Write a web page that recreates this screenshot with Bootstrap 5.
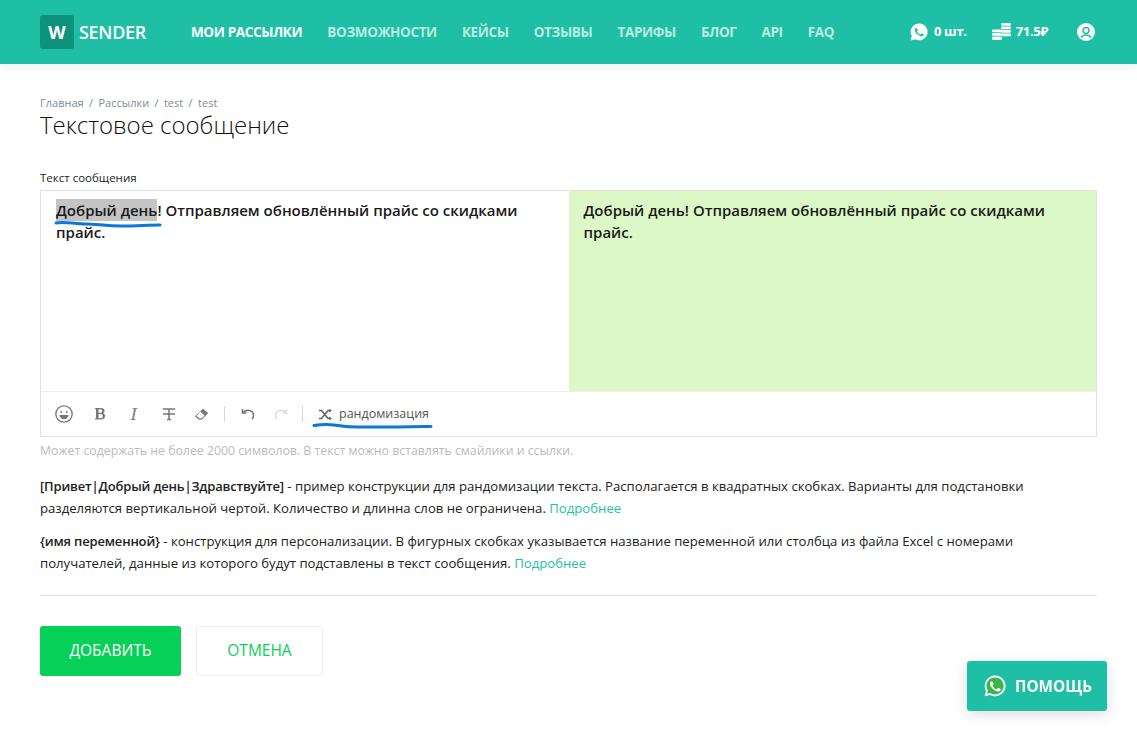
<!DOCTYPE html>
<html lang="ru">
  <head>
    <meta charset="UTF-8" />
    <meta name="viewport" content="width=device-width, initial-scale=1.0" />
    <title>Текстовое сообщение - WSender</title>
    <link href="https://cdn.jsdelivr.net/npm/bootstrap@5.3.0/dist/css/bootstrap.min.css" rel="stylesheet" />
    <style>
      body { font-family: "Open Sans", "Noto Sans", sans-serif; font-size: 13px; color: #212529; overflow: hidden; }
      .top-bar { height: 64px; background: #1fbfa5; padding: 0 40px; box-shadow: 0 2px 10px rgba(0,0,0,.08); }
      .logo-box { width: 34px; height: 34px; background: #0f927d; border-radius: 3px; color: #fff; font-weight: 700; font-size: 18px; }
      .logo-text { color: #fff; font-size: 18px; font-weight: 600; margin-left: 5px; letter-spacing: -.3px; }
      .top-links { margin-left: 45px; gap: 25px; }
      .top-links a { color: rgba(255,255,255,.7); font-size: 13.5px; font-weight: 700; text-decoration: none; letter-spacing: -.35px; }
      .top-links a.active { color: #fff; }
      .top-stat { color: #fff; font-size: 13px; font-weight: 700; gap: 6px; letter-spacing: -.3px; }
      .stat-coins { margin-left: 25px; gap: 5px; }
      .stat-user { margin-left: 29px; margin-right: 2px; }
      .page-body { padding: 32px 40px 0; }
      .crumbs { font-size: 11px; color: #7f8a94; line-height: 14px; }
      .crumbs span { margin: 0 5.4px; }
      .page-title { font-size: 24px; font-weight: 300; line-height: 30px; margin: 0 0 31px; color: #111; }
      .field-label { font-size: 11.5px; line-height: 14px; margin-bottom: 5px; display: block; }
      .editor-box { border: 1px solid #e2e2e2; position: relative; }
      .editor-panes { height: 200px; }
      .pane { padding: 8px 15px; font-size: 15px; font-weight: 600; line-height: 22px; width: 50%; color: #1a1a1a; }
      .pane-preview { background: #dcf8c6; }
      .pick { background: #c4c4c4; display: inline-block; }
      .tool-row { height: 45px; border-top: 1px solid #eee; padding-left: 14px; color: #777; }
      .tool-sep { width: 1px; height: 16px; background: #d8d8d8; }
      .tool-bold { margin-left: 21px; }
      .tool-ital { margin-left: 24px; }
      .tool-strike { margin-left: 24px; }
      .tool-erase { margin-left: 18px; }
      .tool-sep-a { margin-left: 15px; }
      .tool-undo { margin-left: 16px; }
      .tool-redo { margin-left: 19px; }
      .tool-sep-b { margin-left: 14px; }
      .tool-mix { margin-left: 16px; }
      .rand-label { font-size: 12.5px; color: #555; margin-left: 7px; }
      .hint { font-size: 12.3px; color: #bbb; margin: 6px 0 0; line-height: 16px; }
      .note { font-size: 13.15px; line-height: 22px; margin: 0; color: #222; max-width: 1040px; }
      .note b { font-size: 13px; font-weight: 600; letter-spacing: -.17px; }
      .note a { color: #1fbfa5; text-decoration: none; }
      .note-next { margin-top: 11px; }
      .rule { border: 0; border-top: 1px solid #e4e4e4; opacity: 1; margin: 21px 0 30px; }
      .btn-add { background: #07d059; color: #fff; width: 141px; height: 50px; font-size: 15.5px; border-radius: 3px; }
      .btn-cancel { background: #fff; color: #07d059; width: 127px; height: 50px; font-size: 15.5px; border: 1px solid #eee; border-radius: 3px; margin-left: 15px; }
      .help-btn { position: fixed; left: 967px; top: 661px; width: 140px; height: 50px; background: #1fbfa5; color: #fff; font-weight: 700; font-size: 15.3px; border-radius: 3px; box-shadow: 0 3px 14px rgba(0,0,0,.14); gap: 9px; padding-left: 2px; }
      .scribble { position: absolute; pointer-events: none; }
    </style>
  </head>
  <body>
    <nav class="top-bar d-flex align-items-center">
      <div class="logo-box d-flex align-items-center justify-content-center">W</div>
      <div class="logo-text">SENDER</div>
      <div class="top-links d-flex">
        <a class="active" href="#">МОИ РАССЫЛКИ</a>
        <a href="#">ВОЗМОЖНОСТИ</a>
        <a href="#">КЕЙСЫ</a>
        <a href="#">ОТЗЫВЫ</a>
        <a href="#">ТАРИФЫ</a>
        <a href="#">БЛОГ</a>
        <a href="#">API</a>
        <a href="#">FAQ</a>
      </div>
      <div class="ms-auto d-flex align-items-center">
        <div class="top-stat d-flex align-items-center">
          <svg width="18" height="18" viewBox="0 0 22 22"><path fill="#fff" d="M11 .6A10.300 10.300 0 0 0 2.100 16L.7 21.300l5.500-1.400A10.300 10.300 0 1 0 11 .6z"/><path fill="#1fbfa5" d="M7.900 5.800c-.3 0-.7.100-1 .5-.4.400-1 1-1 2.400s1 2.700 1.100 2.900c.2.200 2 3 4.700 4.100 2 .8 2.500.7 3 .6.600-.1 1.500-.7 1.800-1.300.2-.6.200-1.100.1-1.200l-2-1c-.3-.1-.5-.1-.7.100l-.9 1.100c-.2.200-.3.200-.6.100-.3-.1-1.200-.4-2.200-1.400-.8-.7-1.400-1.600-1.500-1.900-.2-.3 0-.4.100-.6l.7-.9c.1-.2.100-.4 0-.6l-.9-2.100c-.2-.4-.4-.4-.7-.4z"/></svg>
          <span>0 шт.</span>
        </div>
        <div class="top-stat stat-coins d-flex align-items-center">
          <svg width="19" height="18" viewBox="0 0 19 18" fill="#fff"><rect x="9" y="0" width="10" height="2.700" rx="1.300"/><rect x="9" y="3.500" width="10" height="2.700" rx="1.300"/><rect x="9" y="7" width="10" height="2.700" rx="1.300"/><rect x="9" y="10.500" width="10" height="2.700" rx="1.300"/><rect x="0" y="6.500" width="10" height="2.700" rx="1.300"/><rect x="0" y="10" width="10" height="2.700" rx="1.300"/><rect x="0" y="13.500" width="10" height="3.500" rx="1.500"/></svg>
          <span>71.5₽</span>
        </div>
        <svg class="stat-user" width="18" height="18" viewBox="0 0 18 18"><circle cx="9" cy="9" r="9" fill="#fff"/><circle cx="9" cy="7.500" r="3" fill="none" stroke="#1fbfa5" stroke-width="1.500"/><path d="M4 14.500c1.200-1.800 3-2.500 5-2.500s3.800.7 5 2.500" fill="none" stroke="#1fbfa5" stroke-width="1.500"/></svg>
      </div>
    </nav>

    <main class="page-body">
      <div class="crumbs">Главная<span>/</span>Рассылки<span>/</span>test<span>/</span>test</div>
      <h1 class="page-title">Текстовое сообщение</h1>

      <label class="field-label">Текст сообщения</label>
      <div class="editor-box">
        <div class="editor-panes d-flex">
          <div class="pane"><span class="pick">Добрый день</span>! Отправляем обновлённый прайс со скидками прайс.</div>
          <div class="pane pane-preview">Добрый день! Отправляем обновлённый прайс со скидками прайс.</div>
        </div>
        <div class="tool-row d-flex align-items-center">
          <svg width="18" height="18" viewBox="0 0 18 18" fill="none" stroke="#777" stroke-width="1.300"><circle cx="9" cy="9" r="8.200"/><circle cx="6.200" cy="7" r="1" fill="#777" stroke="none"/><circle cx="11.800" cy="7" r="1" fill="#777" stroke="none"/><path d="M4.500 10h9c0 2.500-2 4.200-4.500 4.200S4.500 12.500 4.500 10z" fill="#777" stroke="none"/></svg>
          <svg class="tool-bold" width="12" height="14" viewBox="0 0 12 14"><path fill="#777" fill-rule="evenodd" d="M1 1h6c2.200 0 3.600 1 3.600 2.900 0 1.200-.7 2-1.700 2.400 1.300.3 2.200 1.200 2.200 2.700 0 2.200-1.700 3.500-4 3.500H1v-1l1-.2V2.200L1 2zm3.500 1.200v3.600h1.800c1.200 0 1.900-.7 1.900-1.800s-.7-1.800-2-1.800zm0 4.800v4.300h2c1.400 0 2.200-.8 2.200-2.100S7.900 7 6.400 7z"/></svg>
          <svg class="tool-ital" width="8" height="14" viewBox="0 0 8 14"><path fill="#888" d="M2.500 1h5v.8l-1.500.3L4 12l1.500.3v.8H.5v-.8l1.500-.3L4 2.100l-1.500-.3z"/></svg>
          <svg class="tool-strike" width="14" height="14" viewBox="0 0 14 14" fill="none" stroke="#777" stroke-width="1.500"><path d="M1.500 2.800V2h11v.8M7 2v10M5 12.500h4M1 7h12"/></svg>
          <svg class="tool-erase" width="15" height="13" viewBox="0 0 15 13"><path fill="#777" d="M9 .8 14.200 5 8 11.500H4.400L1 8.300z"/><path fill="#fff" d="M6.400 3.500 10.500 7.400 8 10.300H5L2.500 8z"/></svg>
          <span class="tool-sep tool-sep-a"></span>
          <svg class="tool-undo" width="14" height="12" viewBox="0 0 14 12" fill="none" stroke="#777" stroke-width="1.600"><path d="M1.500 1v4h4"/><path d="M1.800 5C3.500 2.600 6 2 8.500 2.500c2.600.6 4 2.600 4 4.700 0 1.500-.6 2.800-1.500 3.800"/></svg>
          <svg class="tool-redo" width="14" height="12" viewBox="0 0 14 12" fill="none" stroke="#ddd" stroke-width="1.600"><path d="M12.500 1v4h-4"/><path d="M12.200 5C10.500 2.600 8 2 5.500 2.500c-2.600.6-4 2.600-4 4.700 0 1.500.6 2.800 1.500 3.800"/></svg>
          <span class="tool-sep tool-sep-b"></span>
          <svg class="tool-mix" width="13" height="11" viewBox="0 0 13 11" fill="none" stroke="#666" stroke-width="1.700"><path d="M0 1.500h2.500L9 9.500h3M0 9.500h2.500L9 1.500h3"/><path d="M10 0v3.500L13 1.500zM10 7.500V11l3-1.500z" fill="#666" stroke="none"/></svg>
          <span class="rand-label">рандомизация</span>
        </div>
      </div>
      <p class="hint">Может содержать не более 2000 символов. В текст можно вставлять смайлики и ссылки.</p>

      <p class="note mt-3"><b>[Привет|Добрый день|Здравствуйте]</b> - пример конструкции для рандомизации текста. Располагается в квадратных скобках. Варианты для подстановки разделяются вертикальной чертой. Количество и длинна слов не ограничена. <a href="#">Подробнее</a></p>
      <p class="note note-next"><b>{имя переменной}</b> - конструкция для персонализации. В фигурных скобках указывается название переменной или столбца из файла Excel с номерами получателей, данные из которого будут подставлены в текст сообщения. <a href="#">Подробнее</a></p>
      <hr class="rule" />
      <div class="d-flex">
        <button class="btn btn-add">ДОБАВИТЬ</button>
        <button class="btn btn-cancel">ОТМЕНА</button>
      </div>
    </main>

    <svg class="scribble" style="left:54px;top:220px" width="110" height="10" viewBox="0 0 110 10"><path d="M2 3c8-2 18 1 30 1 10 0 20 2 36 2 14 0 26-1 38-1" fill="none" stroke="#0a78d8" stroke-width="3" stroke-linecap="round"/></svg>
    <svg class="scribble" style="left:312px;top:422px" width="122" height="8" viewBox="0 0 122 8"><path d="M2 3.500c8-1.500 18-1.500 28 .5s60 1 89 .5" fill="none" stroke="#0a78d8" stroke-width="3" stroke-linecap="round"/></svg>

    <div class="help-btn d-flex align-items-center justify-content-center">
      <svg width="22" height="22" viewBox="0 0 22 22"><path fill="#fff" d="M11 .6A10.300 10.300 0 0 0 2.100 16L.7 21.300l5.500-1.400A10.300 10.300 0 1 0 11 .6z"/><path fill="#39b54a" d="M11 2.400a8.500 8.500 0 0 0-7.100 13.200l-.8 3.100 3.200-.8A8.500 8.500 0 1 0 11 2.400z"/><path fill="#fff" d="M7.900 6.200c-.3 0-.7.100-1 .5-.4.400-1 1-1 2.300s1 2.600 1.100 2.800c.2.200 2 3 4.700 4.100 2 .8 2.500.7 3 .6.600-.1 1.500-.7 1.800-1.300.2-.6.200-1.100.1-1.200l-2-1c-.3-.1-.5-.1-.7.100l-.9 1.100c-.2.200-.3.200-.6.100-.3-.1-1.200-.4-2.200-1.400-.8-.7-1.400-1.600-1.500-1.900-.2-.3 0-.4.100-.6l.7-.9c.1-.2.100-.4 0-.6l-.9-2.100c-.2-.4-.4-.4-.7-.4z"/></svg>
      <span>ПОМОЩЬ</span>
    </div>
    <script src="https://cdn.jsdelivr.net/npm/bootstrap@5.3.0/dist/js/bootstrap.bundle.min.js"></script>
  </body>
</html>
